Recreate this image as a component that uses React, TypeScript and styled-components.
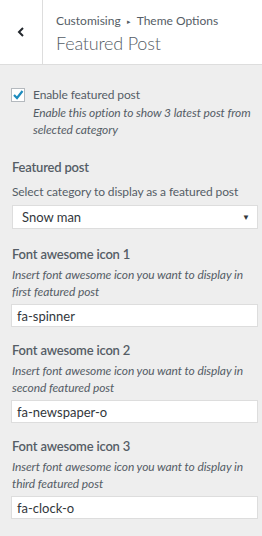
import styled, { createGlobalStyle } from "styled-components";

const GlobalStyle = createGlobalStyle`
  html, body {
    margin: 0;
    padding: 0;
    background: #eeeeee;
    font-family: Lato, "Noto Sans", sans-serif;
    color: #555d66;
  }
`;

const Panel = styled.div`
  width: 262px;
  height: 536px;
  overflow: hidden;
  background: #eeeeee;
`;

const Header = styled.div`
  display: flex;
  height: 64px;
  background: #ffffff;
  border-bottom: 1px solid #dddddd;
`;

const BackButton = styled.div`
  width: 42px;
  display: flex;
  align-items: center;
  justify-content: center;
  border-right: 1px solid #dddddd;
  color: #23282d;
`;

const HeaderText = styled.div`
  display: flex;
  flex-direction: column;
  justify-content: center;
  padding-left: 13px;
  padding-top: 2px;
`;

const Breadcrumb = styled.div`
  font-size: 12px;
  line-height: 19px;
  color: #555d66;
`;

const Arrow = styled.span`
  font-size: 7px;
  margin: 0 6px;
  vertical-align: 1px;
`;

const Title = styled.div`
  font-size: 18px;
  font-weight: 300;
  letter-spacing: -0.2px;
  line-height: 24px;
  color: #555d66;
`;

const Body = styled.div`
  padding: 21px 4px 0 12px;
`;

const Control = styled.div<{ $gap: number }>`
  margin-bottom: ${({ $gap }) => $gap}px;
`;

const CheckRow = styled.div`
  display: flex;
  gap: 8px;
  margin-left: -1px;
`;

const CheckBox = styled.div`
  width: 12px;
  height: 12px;
  flex: none;
  margin-top: 2px;
  border: 1px solid #b4b9be;
  background: #ffffff;
  display: flex;
  align-items: center;
  justify-content: center;
`;

const CheckLabel = styled.div`
  font-size: 12px;
  line-height: 18px;
  letter-spacing: -0.1px;
  color: #555d66;
`;

const Label = styled.div<{ $space: number }>`
  font-size: 13px;
  font-weight: 600;
  letter-spacing: -0.2px;
  line-height: 20px;
  color: #555d66;
  margin-bottom: ${({ $space }) => $space}px;
`;

const Description = styled.div<{ $italic?: boolean; $space: number }>`
  font-size: 12px;
  line-height: 17px;
  letter-spacing: -0.1px;
  font-style: ${({ $italic }) => ($italic ? "italic" : "normal")};
  color: #555d66;
  margin-bottom: ${({ $space }) => $space}px;
`;

const SelectBox = styled.div`
  height: 22px;
  display: flex;
  align-items: center;
  justify-content: space-between;
  padding: 0 7px 0 9px;
  background: #ffffff;
  border: 1px solid #dddddd;
  font-size: 13px;
  color: #32373c;
`;

const Caret = styled.span`
  font-size: 8px;
  color: #32373c;
`;

const TextInput = styled.div`
  height: 21px;
  display: flex;
  align-items: center;
  padding: 0 5px;
  margin-left: -1px;
  background: #ffffff;
  border: 1px solid #dddddd;
  font-size: 13px;
  color: #32373c;
`;

const icons = [
  { n: 1, which: "first", value: "fa-spinner" },
  { n: 2, which: "second", value: "fa-newspaper-o" },
  { n: 3, which: "third", value: "fa-clock-o" },
];

export default function App() {
  return (
    <Panel>
      <GlobalStyle />
      <Header>
        <BackButton>
          <svg width="10" height="10" viewBox="0 0 10 10">
            <path d="M7 1 L3 5 L7 9" fill="none" stroke="#23282d" strokeWidth="2" />
          </svg>
        </BackButton>
        <HeaderText>
          <Breadcrumb>
            Customising<Arrow>▸</Arrow>Theme Options
          </Breadcrumb>
          <Title>Featured Post</Title>
        </HeaderText>
      </Header>
      <Body>
        <Control $gap={19}>
          <CheckRow>
            <CheckBox>
              <svg width="12" height="12" viewBox="0 0 12 12">
                <path d="M2 6 L5 9 L10.5 2" fill="none" stroke="#1e8cbe" strokeWidth="2.2" />
              </svg>
            </CheckBox>
            <div>
              <CheckLabel>Enable featured post</CheckLabel>
              <Description $italic $space={0}>
                Enable this option to show 3 latest post from selected category
              </Description>
            </div>
          </CheckRow>
        </Control>
        <Control $gap={15}>
          <Label $space={6}>Featured post</Label>
          <Description $space={5}>Select category to display as a featured post</Description>
          <SelectBox>
            Snow man<Caret>▼</Caret>
          </SelectBox>
        </Control>
        {icons.map((i) => (
          <Control key={i.n} $gap={13}>
            <Label $space={2}>Font awesome icon {i.n}</Label>
            <Description $italic $space={4}>
              Insert font awesome icon you want to display in {i.which} featured post
            </Description>
            <TextInput>{i.value}</TextInput>
          </Control>
        ))}
      </Body>
    </Panel>
  );
}
